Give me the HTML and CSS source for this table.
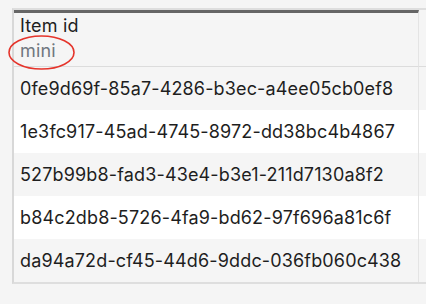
FILE: index.html
```html
<!DOCTYPE html>
<html>
<head>
<meta charset="utf-8">
<link rel="stylesheet" href="styles.css">
</head>
<body>
<div class="page">
  <div class="grid">
    <div class="cell head first">
      <div class="title">Item id</div>
      <div class="sub">mini</div>
    </div>
    <div class="cell head"></div>
    <div class="cell row odd first">0fe9d69f-85a7-4286-b3ec-a4ee05cb0ef8</div>
    <div class="cell row odd"></div>
    <div class="cell row even first">1e3fc917-45ad-4745-8972-dd38bc4b4867</div>
    <div class="cell row even"></div>
    <div class="cell row odd first">527b99b8-fad3-43e4-b3e1-211d7130a8f2</div>
    <div class="cell row odd"></div>
    <div class="cell row even first">b84c2db8-5726-4fa9-bd62-97f696a81c6f</div>
    <div class="cell row even"></div>
    <div class="cell row odd first">da94a72d-cf45-44d6-9ddc-036fb060c438</div>
    <div class="cell row odd"></div>
  </div>
  <svg class="mark" width="70" height="38" viewBox="0 0 70 38">
    <ellipse cx="33.5" cy="17.5" rx="32.5" ry="16.5" fill="none" stroke="#e5342b" stroke-width="1.6"/>
  </svg>
</div>
</body>
</html>
```
FILE: styles.css
```css
html, body {
  margin: 0;
  padding: 0;
  background: #f5f5f5;
  overflow: hidden;
}
.page {
  position: relative;
  width: 426px;
  height: 304px;
  padding: 8px 0 0 12px;
  box-sizing: border-box;
  overflow: hidden;
  font-family: "Inter", "Liberation Sans", sans-serif;
  font-size: 18px;
  letter-spacing: 0.15px;
  color: #1e1e1e;
}
.grid {
  display: grid;
  grid-template-columns: 405px 1fr;
  border-top: 2px solid #dedede;
  border-left: 2px solid #d8d8d8;
  border-bottom: 2px solid #dedede;
}
.cell {
  box-sizing: border-box;
  padding-left: 6px;
  min-width: 0;
}
.cell.first {
  border-right: 1px solid #e4e4e4;
  white-space: nowrap;
}
.head {
  height: 57px;
  background: #f5f5f5;
  border-bottom: 1px solid #dcdcdc;
  border-top: 3px solid transparent;
  line-height: 25px;
}
.head.first {
  border-top-color: #666666;
}
.sub {
  color: #707780;
}
.row {
  height: 43px;
  display: flex;
  align-items: center;
}
.odd { background: #f5f5f5; }
.even { background: #ffffff; }
.mark {
  position: absolute;
  left: 8px;
  top: 35px;
}
```
